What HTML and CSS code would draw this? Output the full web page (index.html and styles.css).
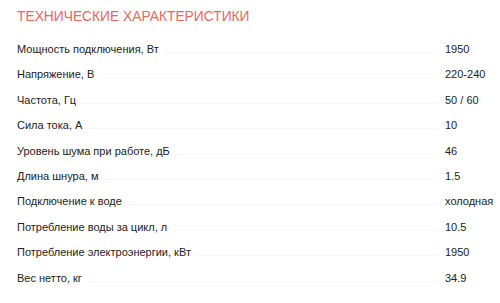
FILE: index.html
```html
<!DOCTYPE html>
<html lang="ru">
<head>
<meta charset="utf-8">
<link rel="stylesheet" href="styles.css">
</head>
<body>
<section class="specs">
  <h2 class="specs-title">Технические характеристики</h2>
  <ul class="specs-list">
    <li class="spec"><span class="spec-name">Мощность подключения, Вт</span><span class="spec-dots"></span><span class="spec-value">1950</span></li>
    <li class="spec"><span class="spec-name">Напряжение, В</span><span class="spec-dots"></span><span class="spec-value">220-240</span></li>
    <li class="spec"><span class="spec-name">Частота, Гц</span><span class="spec-dots"></span><span class="spec-value">50 / 60</span></li>
    <li class="spec"><span class="spec-name">Сила тока, А</span><span class="spec-dots"></span><span class="spec-value">10</span></li>
    <li class="spec"><span class="spec-name">Уровень шума при работе, дБ</span><span class="spec-dots"></span><span class="spec-value">46</span></li>
    <li class="spec"><span class="spec-name">Длина шнура, м</span><span class="spec-dots"></span><span class="spec-value">1.5</span></li>
    <li class="spec"><span class="spec-name">Подключение к воде</span><span class="spec-dots"></span><span class="spec-value">холодная</span></li>
    <li class="spec"><span class="spec-name">Потребление воды за цикл, л</span><span class="spec-dots"></span><span class="spec-value">10.5</span></li>
    <li class="spec"><span class="spec-name">Потребление электроэнергии, кВт</span><span class="spec-dots"></span><span class="spec-value">1950</span></li>
    <li class="spec"><span class="spec-name">Вес нетто, кг</span><span class="spec-dots"></span><span class="spec-value">34.9</span></li>
  </ul>
</section>
</body>
</html>
```
FILE: styles.css
```css
html, body {
  margin: 0;
  padding: 0;
  background: #fff;
}
body {
  font-family: "Liberation Sans", Arial, sans-serif;
  color: #222;
}
.specs {
  padding: 8px 0 0 17px;
}
.specs-title {
  margin: 0;
  font-size: 13.8px;
  font-weight: normal;
  text-transform: uppercase;
  color: #e8675e;
  line-height: 18px;
}
.specs-list {
  list-style: none;
  margin: 16px 0 0;
  padding: 0;
}
.spec {
  display: flex;
  align-items: baseline;
  height: 25.4px;
  font-size: 11px;
  line-height: 14px;
}
.spec-name {
  white-space: nowrap;
}
.spec-dots {
  flex: 1;
  margin: 0 7px 0 6px;
  border-bottom: 1px dotted #eeeeee;
}
.spec-value {
  width: 55px;
  white-space: nowrap;
}
```
